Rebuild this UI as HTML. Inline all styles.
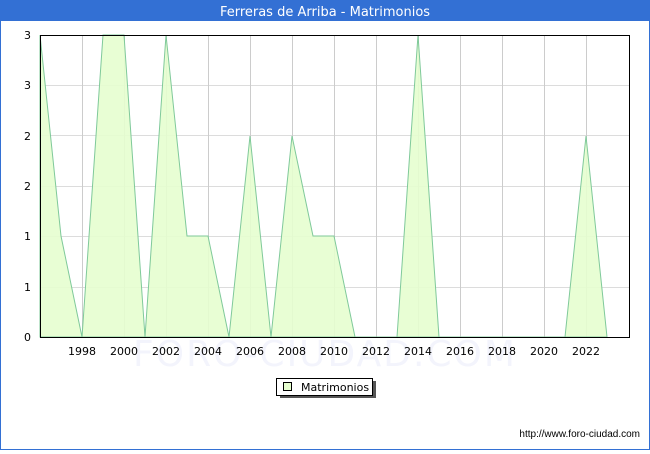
<!DOCTYPE html>
<html><head><meta charset="utf-8"><style>
body{margin:0;width:650px;height:450px;overflow:hidden;background:#fff;font-family:"DejaVu Sans","Liberation Sans",sans-serif}
</style></head><body>
<svg width="650" height="450" xmlns="http://www.w3.org/2000/svg" font-family="DejaVu Sans, Liberation Sans, sans-serif">
<rect x="0.5" y="0.5" width="649" height="449" fill="#fff" stroke="#3370d4"/>
<rect x="0" y="0" width="650" height="21" fill="#3370d4"/>
<text x="325" y="16" fill="#fff" font-size="13" text-anchor="middle">Ferreras de Arriba - Matrimonios</text>
<text x="325" y="366" fill="#f3f4fc" font-size="36" text-anchor="middle" letter-spacing="2">FORO-CIUDAD.COM</text>
<g stroke="#dcdcdc" stroke-width="1">
<line x1="40" y1="85.5" x2="630" y2="85.5"/><line x1="40" y1="135.5" x2="630" y2="135.5"/>
<line x1="40" y1="186.5" x2="630" y2="186.5"/><line x1="40" y1="236.5" x2="630" y2="236.5"/>
<line x1="40" y1="287.5" x2="630" y2="287.5"/>
</g>
<g stroke="#cccccc" stroke-width="1">
<line x1="82.5" y1="35" x2="82.5" y2="337"/><line x1="124.5" y1="35" x2="124.5" y2="337"/>
<line x1="166.5" y1="35" x2="166.5" y2="337"/><line x1="208.5" y1="35" x2="208.5" y2="337"/>
<line x1="250.5" y1="35" x2="250.5" y2="337"/><line x1="292.5" y1="35" x2="292.5" y2="337"/>
<line x1="334.5" y1="35" x2="334.5" y2="337"/><line x1="376.5" y1="35" x2="376.5" y2="337"/>
<line x1="418.5" y1="35" x2="418.5" y2="337"/><line x1="460.5" y1="35" x2="460.5" y2="337"/>
<line x1="502.5" y1="35" x2="502.5" y2="337"/><line x1="544.5" y1="35" x2="544.5" y2="337"/>
<line x1="586.5" y1="35" x2="586.5" y2="337"/>
</g>
<polygon fill="#e6fecf" fill-opacity="0.9" stroke="#7fc99a" stroke-width="1" points="40,337 40,35 61,236 82,337 103,35 124,35 145,337 166,35 187,236 208,236 229,337 250,136 271,337 292,136 313,236 334,236 355,337 376,337 397,337 418,35 439,337 565,337 586,136 607,337"/>
<rect x="40.5" y="35.5" width="589" height="302" fill="none" stroke="#000"/>
<g font-size="11" fill="#000" text-anchor="end">
<text x="31" y="39">3</text><text x="31" y="89">3</text><text x="31" y="140">2</text>
<text x="31" y="190">2</text><text x="31" y="240">1</text><text x="31" y="291">1</text><text x="31" y="341">0</text>
</g>
<g font-size="11" fill="#000" text-anchor="middle">
<text x="82" y="355">1998</text><text x="124" y="355">2000</text><text x="166" y="355">2002</text>
<text x="208" y="355">2004</text><text x="250" y="355">2006</text><text x="292" y="355">2008</text>
<text x="334" y="355">2010</text><text x="376" y="355">2012</text><text x="418" y="355">2014</text>
<text x="460" y="355">2016</text><text x="502" y="355">2018</text><text x="544" y="355">2020</text>
<text x="586" y="355">2022</text>
</g>
<rect x="280" y="381" width="96" height="17" fill="#555"/>
<rect x="276.5" y="378.5" width="96" height="17" fill="#fff" stroke="#000"/>
<rect x="283.5" y="382.5" width="8" height="8" fill="#e6fecf" stroke="#000"/>
<text x="301" y="391" font-size="11" fill="#000">Matrimonios</text>
<text x="640" y="437" font-size="10" fill="#000" text-anchor="end" font-family="Liberation Sans, sans-serif">http://www.foro-ciudad.com</text>
</svg>
</body></html>
